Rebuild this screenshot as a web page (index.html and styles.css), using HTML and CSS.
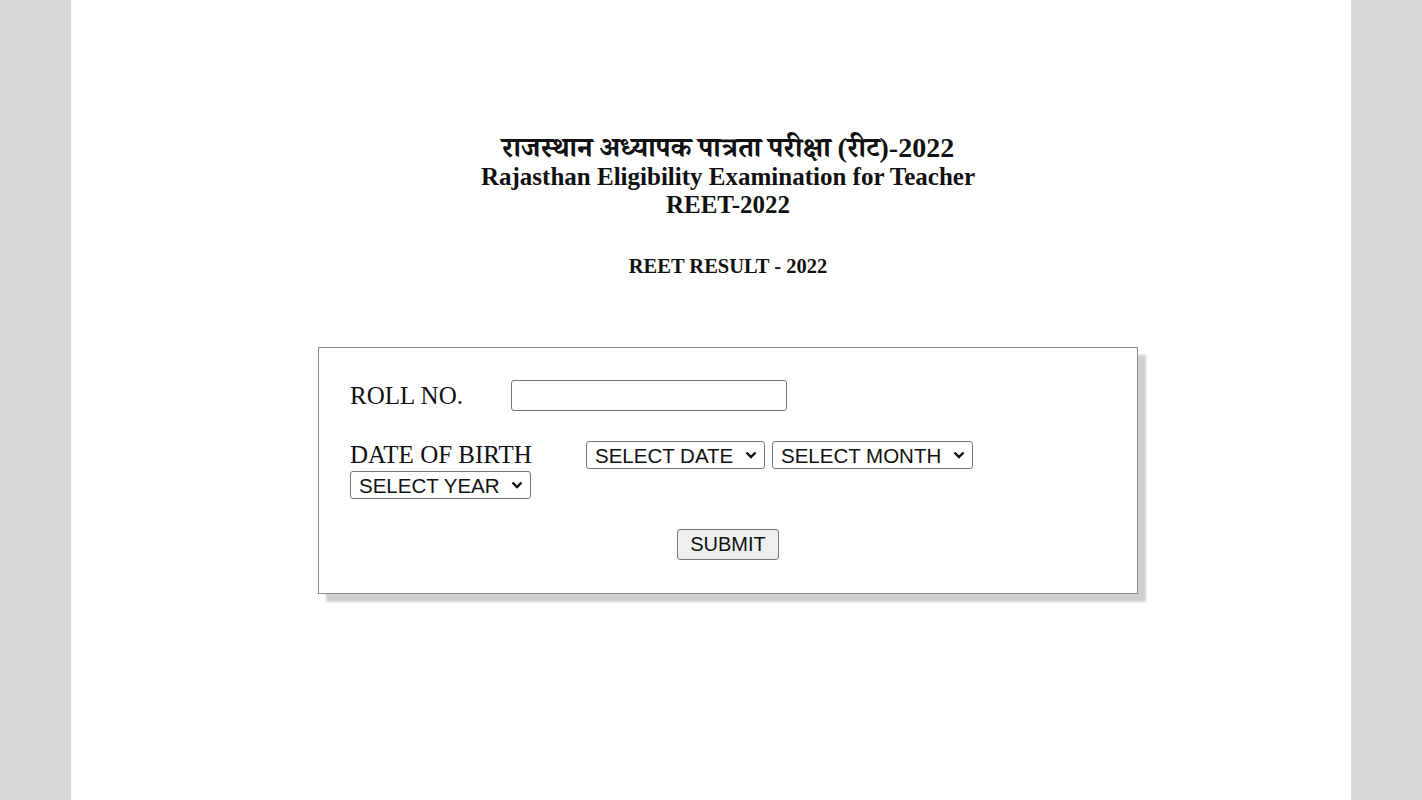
FILE: index.html
```html
<!DOCTYPE html>
<html lang="hi">
<head>
<meta charset="utf-8">
<title>REET RESULT - 2022</title>
<link rel="stylesheet" href="styles.css">
</head>
<body>
<div class="page">
  <div class="content">
    <div class="heading">
      <div class="line hindi">राजस्थान अध्यापक पात्रता परीक्षा (रीट)-2022</div>
      <div class="line">Rajasthan Eligibility Examination for Teacher</div>
      <div class="line">REET-2022</div>
    </div>
    <div class="subheading">REET RESULT - 2022</div>
    <form class="form-box">
      <div class="row roll-row">
        <label class="label roll-label">ROLL NO.</label>
        <input class="text-input" type="text">
      </div>
      <div class="row dob-row">
        <label class="label dob-label">DATE OF BIRTH</label>
        <span class="sel-wrap sel-date">
          <select class="sel"><option>SELECT DATE</option></select>
          <svg class="chev" width="12" height="8" viewBox="0 0 12 8"><path d="M1.5 1.5 L6 6 L10.5 1.5" fill="none" stroke="#111" stroke-width="2.4"/></svg>
        </span>
        <span class="sel-wrap sel-month">
          <select class="sel"><option>SELECT MONTH</option></select>
          <svg class="chev" width="12" height="8" viewBox="0 0 12 8"><path d="M1.5 1.5 L6 6 L10.5 1.5" fill="none" stroke="#111" stroke-width="2.4"/></svg>
        </span>
        <span class="sel-wrap sel-year">
          <select class="sel"><option>SELECT YEAR</option></select>
          <svg class="chev" width="12" height="8" viewBox="0 0 12 8"><path d="M1.5 1.5 L6 6 L10.5 1.5" fill="none" stroke="#111" stroke-width="2.4"/></svg>
        </span>
      </div>
      <div class="submit-row">
        <button type="button" class="submit">SUBMIT</button>
      </div>
    </form>
  </div>
</div>
</body>
</html>
```
FILE: styles.css
```css
html, body {
  margin: 0;
  padding: 0;
}
body {
  background: #d8d8d8;
  font-family: "Liberation Serif", "Noto Serif Devanagari", "Noto Sans Devanagari", serif;
  color: #111;
}
.page {
  margin-left: 71px;
  width: 1280px;
  min-height: 800px;
  background: #fff;
}
.content {
  padding-left: 34px;
  padding-top: 134px;
  display: flex;
  flex-direction: column;
  align-items: center;
}
.heading {
  text-align: center;
  font-weight: bold;
  font-size: 25px;
  line-height: 28px;
}
.hindi {
  font-size: 28px;
  line-height: 30px;
  margin-top: -1px;
}
.subheading {
  margin-top: 35px;
  font-weight: bold;
  font-size: 20.5px;
  line-height: 24px;
}
.form-box {
  margin-top: 69px;
  width: 756px;
  padding: 32px 31px 33px 31px;
  border: 1px solid #8a8a8a;
  box-shadow: 8px 8px 2px #cfcfcf;
  background: #fff;
}
.row {
  display: flex;
  flex-wrap: wrap;
  align-items: center;
}
.label {
  font-size: 25px;
  line-height: 28px;
}
.roll-label {
  width: 161px;
}
.text-input {
  width: 276px;
  height: 31px;
  box-sizing: border-box;
  border: 1px solid #767676;
  border-radius: 3px;
  padding: 0 4px;
  font-size: 20px;
}
.dob-row {
  margin-top: 30px;
  column-gap: 7px;
  row-gap: 2px;
}
.dob-label {
  width: 229px;
}
.sel-wrap {
  position: relative;
  display: inline-flex;
}
.sel {
  appearance: none;
  -webkit-appearance: none;
  width: 100%;
  height: 28px;
  box-sizing: border-box;
  padding: 0 0 0 8px;
  font-family: "Liberation Sans", Arial, sans-serif;
  font-size: 20.5px;
  color: #111;
  border: 1px solid #767676;
  border-radius: 3px;
  background: #fff;
}
.chev {
  position: absolute;
  right: 8px;
  top: 10px;
  pointer-events: none;
}
.sel-date { width: 179px; }
.sel-month { width: 201px; }
.sel-year { width: 181px; }
.submit-row {
  margin-top: 30px;
  display: flex;
  justify-content: center;
}
.submit {
  width: 102px;
  height: 31px;
  font-family: "Liberation Sans", Arial, sans-serif;
  font-size: 20px;
  color: #111;
  background: #efefef;
  border: 1px solid #767676;
  border-radius: 3px;
  padding: 0;
}
```
